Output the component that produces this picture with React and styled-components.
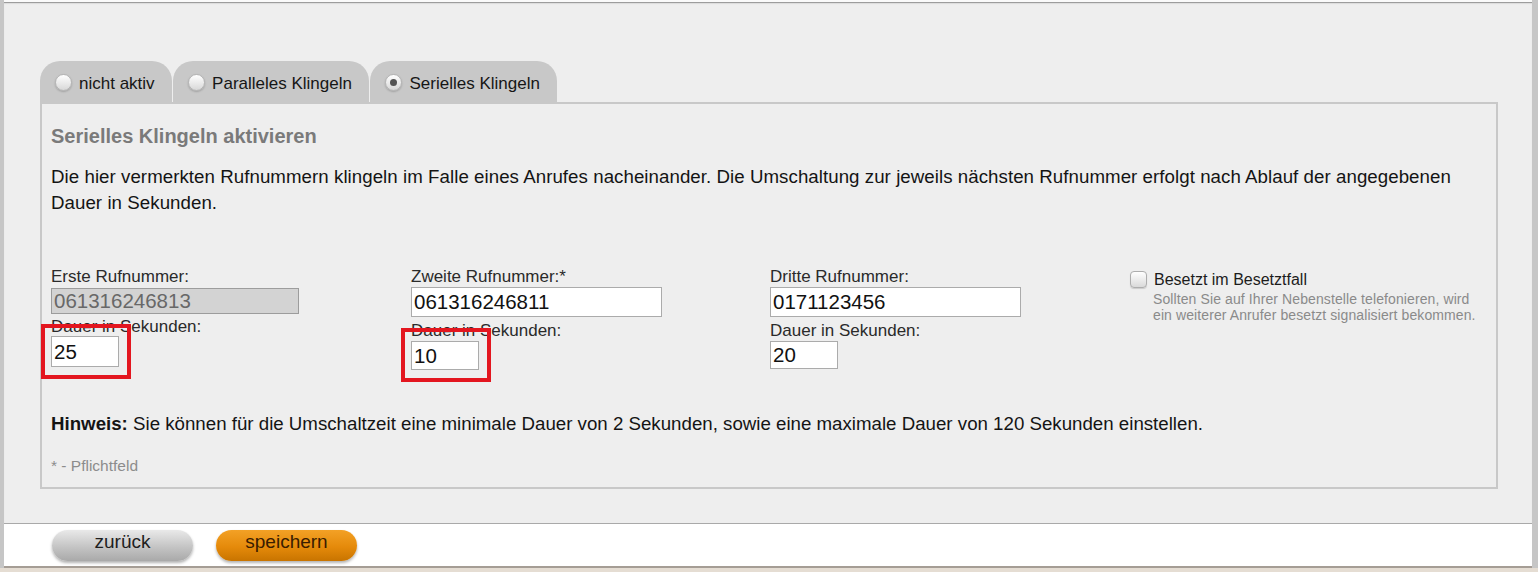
import React, { useState } from "react";
import styled, { createGlobalStyle } from "styled-components";

const GlobalStyle = createGlobalStyle`
  html, body {
    margin: 0;
    padding: 0;
  }
  body {
    background: #e5ddd3;
    font-family: "Liberation Sans", Arial, sans-serif;
    color: #1a1a1a;
  }
`;

const Frame = styled.div`
  width: 1538px;
  box-sizing: border-box;
  padding-top: 2px;
  background: #fafafa;
  border-left: 4px solid #c6c6c6;
  border-right: 6px solid #c6c6c6;
`;

const Main = styled.div`
  background: #eeeeee;
  border-top: 1px solid #9c9c9c;
  box-shadow: inset 0 1px 1px rgba(0, 0, 0, 0.08);
  padding: 58px 34px 34px 36px;
`;

const TabBar = styled.div`
  display: flex;
  gap: 1.5px;
  height: 41px;
`;

const Tab = styled.label`
  display: flex;
  align-items: flex-start;
  gap: 7px;
  box-sizing: border-box;
  height: 41px;
  padding: 8px 17px 0 15px;
  background: #c8c8c8;
  border-radius: 20px 20px 0 0;
  font-size: 17px;
  line-height: 20px;
  color: #161616;
  cursor: pointer;
  span {
    margin-top: 5px;
    white-space: nowrap;
  }
`;

const Radio = styled.span`
  position: relative;
  flex: none;
  width: 17px;
  height: 17px;
  margin-top: 1px;
  box-sizing: border-box;
  border-radius: 50%;
  border: 1px solid #b4b4b4;
  background: linear-gradient(#ffffff, #d8d8d8);
  box-shadow: 0 1px 2px rgba(0, 0, 0, 0.2);
  &::after {
    content: "";
    display: ${(p) => (p.checked ? "block" : "none")};
    position: absolute;
    left: 4px;
    top: 4px;
    width: 7px;
    height: 7px;
    border-radius: 50%;
    background: #545454;
  }
`;

const Panel = styled.div`
  border: 2px solid #c8c8c8;
  padding: 20px 9px 12px;
`;

const Heading = styled.h2`
  margin: 0;
  font-size: 20px;
  line-height: 24px;
  font-weight: bold;
  color: #7a7a7a;
`;

const Intro = styled.p`
  margin: 16px 0 0;
  width: 1420px;
  font-size: 18.7px;
  line-height: 26px;
  letter-spacing: 0.05px;
  color: #141414;
`;

const FieldGrid = styled.div`
  display: grid;
  grid-template-columns: 360px 359px 360px auto;
  align-items: start;
  margin-top: 51px;
`;

const Field = styled.div`
  display: flex;
  flex-direction: column;
  align-items: flex-start;
`;

const Label = styled.div`
  font-size: 17px;
  line-height: 19px;
  color: #2a2a2a;
  margin-top: ${(p) => p.$gap || 0}px;
`;

const NumberInput = styled.input`
  box-sizing: border-box;
  width: ${(p) => p.$w}px;
  height: ${(p) => p.$h}px;
  margin-top: ${(p) => p.$gap || 0}px;
  padding: 0 2px;
  font-family: "Liberation Sans", Arial, sans-serif;
  font-size: 20.5px;
  color: #111;
  background: #fff;
  border: 1px solid #ababab;
  outline: none;
  &:disabled {
    background: #d3d3d3;
    border-color: #9c9c9c;
    color: #686868;
  }
`;

const Marked = styled.div`
  position: relative;
  &::after {
    content: "";
    position: absolute;
    inset: -12px -12px -12px -10px;
    border: 4px solid #e3161f;
    pointer-events: none;
  }
`;

const CheckRow = styled.label`
  display: flex;
  align-items: flex-start;
  gap: 7px;
  font-size: 16px;
  line-height: 18px;
  color: #1c1c1c;
  span {
    margin-top: 4px;
  }
`;

const Checkbox = styled.span`
  flex: none;
  width: 17px;
  height: 17px;
  margin-top: -4px;
  box-sizing: border-box;
  border: 1px solid #adadad;
  border-radius: 4px;
  background: linear-gradient(#ffffff, #d9d9d9);
  box-shadow: 0 1px 1px rgba(0, 0, 0, 0.15);
`;

const Help = styled.div`
  margin: 2px 0 0 23px;
  font-size: 14px;
  line-height: 16px;
  letter-spacing: 0.1px;
  color: #8a8a8a;
`;

const Note = styled.p`
  margin: 42px 0 0;
  font-size: 18.7px;
  line-height: 24px;
  color: #141414;
  b {
    font-weight: bold;
  }
`;

const Required = styled.div`
  margin-top: 21px;
  font-size: 15.5px;
  line-height: 18px;
  color: #8c8c8c;
`;

const Footer = styled.div`
  display: flex;
  gap: 23px;
  height: 45px;
  padding: 6px 0 0 48px;
  box-sizing: border-box;
  background: #fff;
  border-top: 1px solid #a9a9a9;
  border-bottom: 2px solid #a59d95;
`;

const PillButton = styled.button`
  width: 141px;
  height: 31px;
  border: none;
  border-radius: 16px;
  font-family: "Liberation Sans", Arial, sans-serif;
  font-size: 19px;
  line-height: 24px;
  padding: 0 0 7px;
  cursor: pointer;
  color: ${(p) => (p.$primary ? "#3a1c00" : "#1e1e1e")};
  background: ${(p) =>
    p.$primary
      ? "linear-gradient(#f3a126, #e58a0a 55%, #c87400)"
      : "linear-gradient(#e9e9e9, #c4c4c4 55%, #a9a9a9)"};
  box-shadow: 0 2px 3px rgba(0, 0, 0, 0.3);
`;

const modes = [
  { id: "off", label: "nicht aktiv" },
  { id: "parallel", label: "Paralleles Klingeln" },
  { id: "serial", label: "Serielles Klingeln" },
];

export default function App() {
  const [mode, setMode] = useState("serial");

  return (
    <>
      <GlobalStyle />
      <Frame>
        <Main>
          <TabBar>
            {modes.map((m) => (
              <Tab key={m.id} onClick={() => setMode(m.id)}>
                <Radio checked={mode === m.id} />
                <span>{m.label}</span>
              </Tab>
            ))}
          </TabBar>
          <Panel>
            <Heading>Serielles Klingeln aktivieren</Heading>
            <Intro>
              Die hier vermerkten Rufnummern klingeln im Falle eines Anrufes
              nacheinander. Die Umschaltung zur jeweils nächsten Rufnummer
              erfolgt nach Ablauf der angegebenen Dauer in Sekunden.
            </Intro>

            <FieldGrid>
              <Field>
                <Label>Erste Rufnummer:</Label>
                <NumberInput $w={248} $h={26} $gap={2} defaultValue="061316246813" disabled />
                <Label $gap={3}>Dauer in Sekunden:</Label>
                <Marked>
                  <NumberInput $w={68} $h={31} defaultValue="25" />
                </Marked>
              </Field>
              <Field>
                <Label>Zweite Rufnummer:*</Label>
                <NumberInput $w={251} $h={30} $gap={1} defaultValue="061316246811" />
                <Label $gap={4}>Dauer in Sekunden:</Label>
                <Marked>
                  <NumberInput $w={68} $h={29} $gap={1} defaultValue="10" />
                </Marked>
              </Field>
              <Field>
                <Label>Dritte Rufnummer:</Label>
                <NumberInput $w={251} $h={30} $gap={1} defaultValue="0171123456" />
                <Label $gap={4}>Dauer in Sekunden:</Label>
                <NumberInput $w={68} $h={28} $gap={1} defaultValue="20" />
              </Field>
              <Field>
                <CheckRow>
                  <Checkbox />
                  <span>Besetzt im Besetztfall</span>
                </CheckRow>
                <Help>
                  Sollten Sie auf Ihrer Nebenstelle telefonieren, wird
                  <br />
                  ein weiterer Anrufer besetzt signalisiert bekommen.
                </Help>
              </Field>
            </FieldGrid>

            <Note>
              <b>Hinweis:</b> Sie können für die Umschaltzeit eine minimale
              Dauer von 2 Sekunden, sowie eine maximale Dauer von 120 Sekunden
              einstellen.
            </Note>
            <Required>* - Pflichtfeld</Required>
          </Panel>
        </Main>
        <Footer>
          <PillButton>zurück</PillButton>
          <PillButton $primary>speichern</PillButton>
        </Footer>
      </Frame>
    </>
  );
}
